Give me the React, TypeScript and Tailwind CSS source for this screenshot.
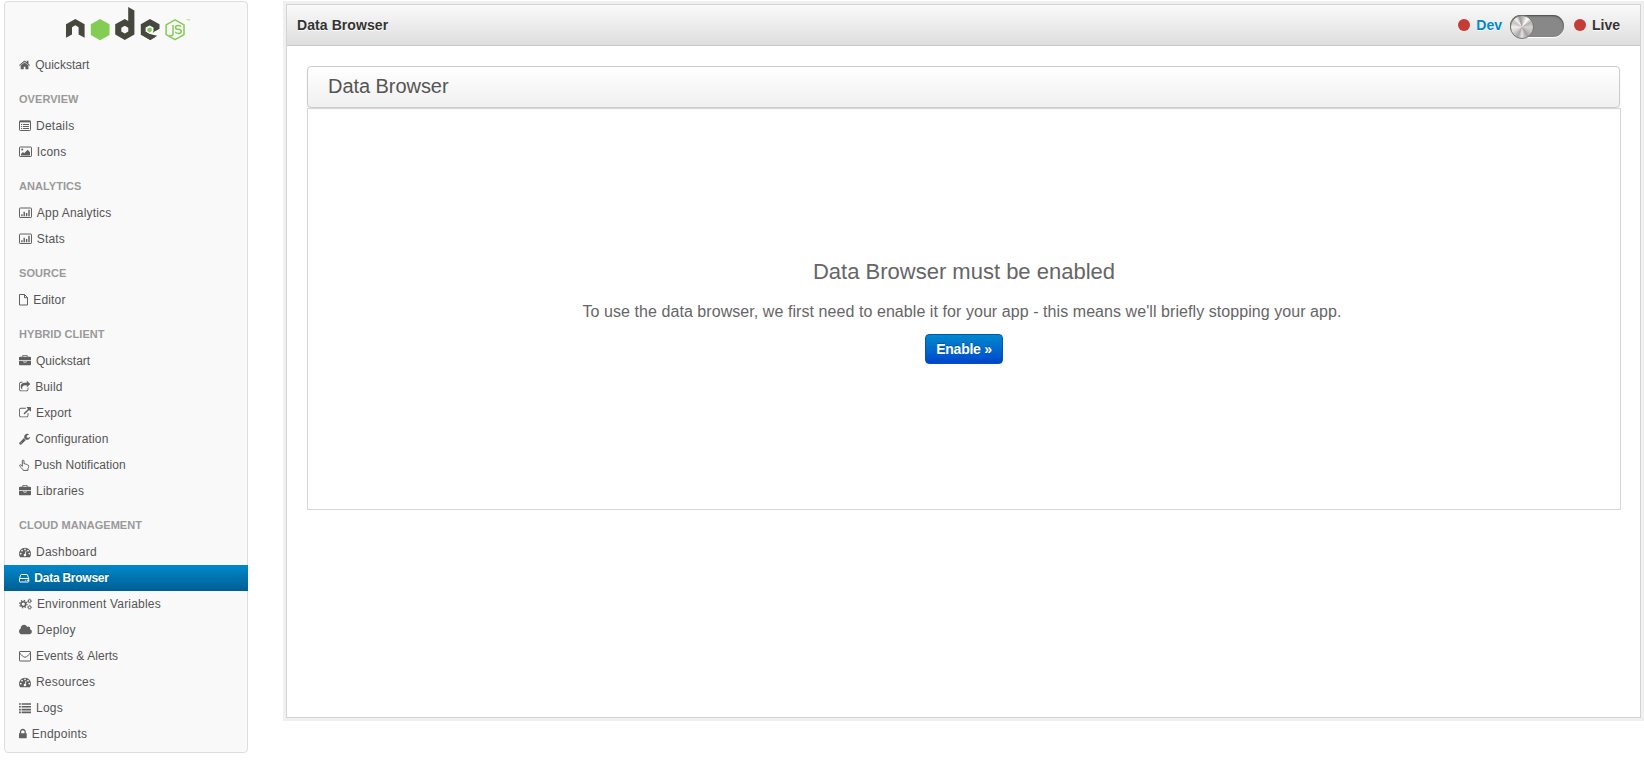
import React from "react";

type IconDef = { w: number; x?: number; d: string };

const icons: Record<string, IconDef> = {
  home: { w: 1664, x: 64, d: "M1472 992v480q0 26-19 45t-45 19h-384v-384h-256v384h-384q-26 0-45-19t-19-45v-480q0-1 .5-3t.5-3l575-474 575 474q1 2 1 6zm223-69l-62 74q-8 9-21 11h-3q-13 0-21-7l-692-577-692 577q-12 8-24 7-13-2-21-11l-62-74q-8-10-7-23.5t11-21.5l719-599q32-26 76-26t76 26l244 204v-195q0-14 9-23t23-9h192q14 0 23 9t9 23v408l219 182q10 8 11 21.5t-7 23.5z" },
  briefcase: { w: 1792, d: "M640 256h512v-128h-512v128zm1152 640v480q0 66-47 113t-113 47h-1472q-66 0-113-47t-47-113v-480h672v160q0 26 19 45t45 19h320q26 0 45-19t19-45v-160h672zm-768 0v128h-256v-128h256zm768-480v384h-1792v-384q0-66 47-113t113-47h352v-160q0-40 28-68t68-28h576q40 0 68 28t28 68v160h352q66 0 113 47t47 113z" },
  share: { w: 1664, x: 64, d: "M1472 989v259q0 119-84.500 203.500t-203.500 84.500h-832q-119 0-203.500-84.500t-84.500-203.500v-832q0-119 84.500-203.500t203.500-84.500h255q13 0 22.500 9.500t9.500 22.500q0 27-26 32-77 26-133 60-10 4-16 4h-112q-66 0-113 47t-47 113v832q0 66 47 113t113 47h832q66 0 113-47t47-113v-214q0-19 18-29 28-13 54-37 16-16 35-8 21 9 21 29zm237-496l-384 384q-18 19-45 19-12 0-25-5-39-17-39-59v-192h-160q-323 0-438 131-119 137-74 473 3 23-20 34-8 2-12 2-16 0-26-13-10-14-21-31t-39.500-68.500-49.500-99.500-38.500-114-17.500-122q0-49 3.500-91t14-90 28-88 47-81.500 68.500-74 94.500-61.500 124.500-48.500 159.500-30.500 196.500-11h160v-192q0-42 39-59 13-5 25-5 26 0 45 19l384 384q19 19 19 45t-19 45z" },
  external: { w: 1792, d: "M1408 928v320q0 119-84.500 203.500t-203.500 84.500h-832q-119 0-203.500-84.500t-84.500-203.500v-832q0-119 84.500-203.500t203.500-84.500h704q14 0 23 9t9 23v64q0 14-9 23t-23 9h-704q-66 0-113 47t-47 113v832q0 66 47 113t113 47h832q66 0 113-47t47-113v-320q0-14 9-23t23-9h64q14 0 23 9t9 23zm384-864v512q0 26-19 45t-45 19-45-19l-176-176-652 652q-10 10-23 10t-23-10l-114-114q-10-10-10-23t10-23l652-652-176-176q-19-19-19-45t19-45 45-19h512q26 0 45 19t19 45z" },
  wrench: { w: 1664, x: 64, d: "M448 1472q0-26-19-45t-45-19-45 19-19 45 19 45 45 19 45-19 19-45zm644-420l-682 682q-37 37-90 37-52 0-91-37l-106-108q-38-36-38-90 0-53 38-91l681-681q39 98 114.500 173.500t173.500 114.500zm634-435q0 39-23 106-47 134-164.500 217.500t-258.500 83.500q-185 0-316.500-131.500t-131.500-316.500 131.500-316.500 316.500-131.500q58 0 121.500 16.500t107.500 46.500q16 11 16 28t-16 28l-293 169v224l193 107q5-3 79-48.500t135.500-81 70.500-35.500q15 0 23.500 10t8.500 25z" },
  dashboard: { w: 1792, d: "M384 1152q0-53-37.500-90.500t-90.500-37.500-90.500 37.500-37.500 90.500 37.500 90.500 90.500 37.500 90.500-37.500 37.500-90.500zm192-448q0-53-37.500-90.500t-90.500-37.500-90.500 37.500-37.500 90.500 37.500 90.500 90.500 37.500 90.500-37.500 37.500-90.500zm428 481l101-382q6-26-7.500-48.500t-38.500-29.500-48 6.500-30 39.500l-101 382q-60 5-107 43.500t-63 98.500q-20 77 20 146t117 89 146-20 89-117q16-60-6-117t-72-91zm660-33q0-53-37.500-90.500t-90.500-37.500-90.500 37.500-37.500 90.500 37.500 90.500 90.500 37.500 90.500-37.500 37.500-90.500zm-640-640q0-53-37.500-90.500t-90.500-37.500-90.500 37.500-37.500 90.500 37.500 90.500 90.500 37.500 90.500-37.500 37.500-90.500zm448 192q0-53-37.500-90.500t-90.500-37.500-90.500 37.500-37.500 90.500 37.500 90.500 90.500 37.500 90.500-37.500 37.500-90.500zm320 448q0 261-141 483-19 29-54 29h-1402q-35 0-54-29-141-221-141-483 0-182 71-348t191-286 286-191 348-71 348 71 286 191 191 286 71 348z" },
  cloud: { w: 1920, x: -64, d: "M1856 1152q0 159-112.500 271.500t-271.500 112.500h-1088q-185 0-316.500-131.500t-131.500-316.500q0-132 71-241.500t187-163.500q-2-28-2-43 0-212 150-362t362-150q158 0 286.500 88t187.500 230q70-62 166-62 106 0 181 75t75 181q0 75-41 138 129 30 213 134.500t84 239.500z" },
  lock: { w: 1152, x: 320, d: "M640 768h512v-192q0-106-75-181t-181-75-181 75-75 181v192zm832 96v576q0 40-28 68t-68 28h-960q-40 0-68-28t-28-68v-576q0-40 28-68t68-28h32v-192q0-184 132-316t316-132 316 132 132 316v192h32q40 0 68 28t28 68z" },
};

// Glyphs on a 12px grid
const drawn: Record<string, { w: number; node: React.ReactNode }> = {
  listAlt: {
    w: 12,
    node: (
      <>
        <rect x=".5" y="1" width="11" height="9.500" rx=".8" />
        <path d="M.5 1.500h11" strokeWidth="1.800" />
        <path d="M2 4.500h1.200M4 4.500h6M2 6.500h1.200M4 6.500h6M2 8.500h1.200M4 8.500h6" />
      </>
    ),
  },
  picture: {
    w: 12.86,
    node: (
      <>
        <rect x=".5" y="1" width="12" height="9.500" rx=".6" />
        <path fill="currentColor" stroke="none" d="M2 9.500V8l2-2 1.200 1.200L8.700 3.800 11 6.200v3.300z" />
        <circle cx="3.200" cy="3.600" r="1" fill="currentColor" stroke="none" />
      </>
    ),
  },
  chart: {
    w: 12.86,
    node: (
      <>
        <rect x=".5" y="1" width="12" height="9.500" rx=".6" />
        <path strokeWidth="1.400" d="M2.900 9.300V7.300M5.200 9.300V4.800M7.600 9.300V6M10 9.300V2.700" />
      </>
    ),
  },
  list: {
    w: 12,
    node: <path strokeWidth="1.600" d="M0 2h1.800M2.600 2H12M0 4.800h1.800M2.600 4.800H12M0 7.600h1.800M2.600 7.600H12M0 10.400h1.800M2.600 10.400H12" />,
  },
  fileAlt: { w: 9.3, node: <path d="M.5 .5h5l3 3v7.500h-8zM5.500 .5v3.200h3" /> },
  hand: { w: 10.3, node: <path d="M3.300 7.400V2q0-.9.800-.9t.9.900v2.700q1.300-.2 1.700.5 1.300-.2 1.600.7 1.400 0 1.400 1.400 0 1.300-.7 2.200v1.900H4.200q0-1-1.700-2.400Q.6 7.400.6 6.600q.1-.8.900-.8t1.800 1.600z" /> },
  hdd: { w: 10.3, node: <><path d="M.5 6.800v2.600q0 .6.600.6h8q.6 0 .6-.6V6.800q0-.5-1.200-3.900-.2-.4-.6-.4H2.300q-.4 0-.6.400Q.5 6.300.5 6.800z" /><path d="M.5 6.500h9.200M6.300 8.300h.9M8 8.300h.9" /></> },
  mail: { w: 12, node: <path d="M1 1.500h10q.5 0 .5.500v8.500q0 .5-.5.500H1q-.5 0-.5-.5V2q0-.5.500-.5zM.6 2.800Q1 4 2.600 5.200 5 7.300 6 7.300t3.400-2.100Q11 4 11.400 2.800" /> },
};

function Cogs() {
  return (
    <svg className="block h-3 w-[12.900px] shrink-0 overflow-visible" viewBox="0 0 12.900 12" fill="none" stroke="currentColor">
      <circle cx="4.300" cy="6.100" r="2.400" strokeWidth="1.500" />
      <circle cx="4.300" cy="6.100" r="3.700" strokeWidth="1.200" strokeDasharray="1.350 1.556" />
      <circle cx="10.600" cy="3" r="1.300" strokeWidth="1" />
      <circle cx="10.600" cy="3" r="2" strokeWidth=".7" strokeDasharray=".9 .67" />
      <circle cx="10.600" cy="9.300" r="1.300" strokeWidth="1" />
      <circle cx="10.600" cy="9.300" r="2" strokeWidth=".7" strokeDasharray=".9 .67" />
    </svg>
  );
}

function Icon({ name }: { name: string }) {
  if (name === "cogs") return <Cogs />;
  const s = drawn[name];
  if (s) {
    return (
      <svg className="block h-3 shrink-0 overflow-visible" width={s.w} viewBox={`0 0 ${s.w} 12`} fill="none" stroke="currentColor" strokeWidth="1" strokeLinejoin="round">
        {s.node}
      </svg>
    );
  }
  const i = icons[name];
  return (
    <svg className="block h-3 shrink-0 overflow-visible" width={(i.w / 1792) * 12} viewBox={`${i.x ?? 0} 0 ${i.w} 1792`} fill="currentColor">
      <path d={i.d} />
    </svg>
  );
}

function Item({ icon, label, active, tracking = "tracking-[0.150px]" }: { icon: string; label: string; active?: boolean; tracking?: string }) {
  return (
    <a
      className={
        active
          ? "-mx-px flex h-[26px] items-center gap-[5px] bg-gradient-to-b from-[#0088cc] to-[#005f94] pl-[15px] font-bold text-white [text-shadow:0_-1px_0_rgba(0,0,0,0.2)]"
          : "flex h-[26px] items-center gap-[5px] pl-[14px] text-[#555555]"
      }
    >
      <span className={active ? "text-white" : "text-[#606060]"}>
        <Icon name={icon} />
      </span>
      <span className={active ? "tracking-[-0.250px]" : tracking}>{label}</span>
    </a>
  );
}

function Heading({ children }: { children: string }) {
  return <h3 className="mt-[9px] flex h-[26px] items-center pb-[2px] pl-[14px] text-[11px] font-bold tracking-[0.050px] text-[#999999]">{children}</h3>;
}

function Logo() {
  return (
    <svg className="ml-[60px] mt-[4px] block h-[36px] w-[125px]" viewBox="65 6 125 36">
      <g fill="#46483e">
        <path d="M66 24.300L75.300 19l9.300 5.300v13.400l-6-3.300v-7.200L75.300 25.200 72 27.200v7.200l-6 3.300z" />
        <path fillRule="evenodd" d="M128.200 7l6.200 3.400v24.200l-9.600 5.400-9.600-5.400V24.300l9.600-5.300 3.400 1.900zM124.800 25.700l-3.500 2v3.900l3.500 2 3.500-2v-3.900z" />
        <path d="M150 19l9.500 5.300v4.700l-6.400 3.800-3.600-6.600-3.700 2.100v3.500l9.500 5.300-5 3-9.500-5.400V24.300z" />
        <path d="M145.800 31.800l3.700 2.200 7.800 1.700-7 4.300-6-3.400z" />
      </g>
      <path fill="#f9f9f9" d="M149.600 25.400l3.900 2.200v3.900l-3.900 2.200-3.900-2.200v-3.900zM153.400 32.200l6.600-3.400v3.900l-4.200 2.300z" />
      <path fill="#83cd54" d="M100.100 19l9.400 5.300v10.600l-9.400 5.300-9.300-5.300V24.300zM149.600 27.400l2.200 1.200v2.500l-2.200 1.300-2.200-1.300v-2.500z" />
      <path fill="none" stroke="#83cd54" strokeWidth="1.500" strokeLinejoin="round" d="M175 19.800l9 5v9.900l-9 5-8.900-5v-9.900z" />
      <path fill="none" stroke="#83cd54" strokeWidth="1.500" d="M173 25v8.500q0 2.200-1.800 2.200-1 0-2-.7M181 26.500q-1-.9-2.900-.9-2.600 0-2.600 1.800t2.800 1.800q3 .2 3 2.100 0 2.100-2.900 2.100-2.200 0-3.300-1.500" />
      <path fill="none" stroke="#83cd54" strokeWidth=".5" d="M186.500 19.500h1.500M188.500 20.500v-1l.6.800.6-.8v1" />
    </svg>
  );
}

export default function App() {
  return (
    <div className="flex h-[762px] w-[1644px] overflow-hidden bg-white font-['Liberation_Sans',Arial,sans-serif] text-[12px] text-[#555555]">
      <aside className="ml-[4px] mt-[1px] h-[752px] w-[244px] shrink-0 rounded-[4px] border border-[#dddddd] bg-[#f9f9f9]">
        <Logo />
        <nav className="mt-[10px]">
          <Item icon="home" label="Quickstart" tracking="tracking-[0.020px]" />
          <Heading>OVERVIEW</Heading>
          <Item icon="listAlt" label="Details" tracking="tracking-[0.250px]" />
          <Item icon="picture" label="Icons" />
          <Heading>ANALYTICS</Heading>
          <Item icon="chart" label="App Analytics" tracking="tracking-[0.200px]" />
          <Item icon="chart" label="Stats" />
          <Heading>SOURCE</Heading>
          <Item icon="fileAlt" label="Editor" />
          <Heading>HYBRID CLIENT</Heading>
          <Item icon="briefcase" label="Quickstart" tracking="tracking-[0.020px]" />
          <Item icon="share" label="Build" />
          <Item icon="external" label="Export" />
          <Item icon="wrench" label="Configuration" />
          <Item icon="hand" label="Push Notification" tracking="tracking-[0.080px]" />
          <Item icon="briefcase" label="Libraries" tracking="tracking-[0.250px]" />
          <Heading>CLOUD MANAGEMENT</Heading>
          <Item icon="dashboard" label="Dashboard" tracking="tracking-[0.250px]" />
          <Item icon="hdd" label="Data Browser" active />
          <Item icon="cogs" label="Environment Variables" tracking="tracking-[0.200px]" />
          <Item icon="cloud" label="Deploy" tracking="tracking-[0.250px]" />
          <Item icon="mail" label="Events & Alerts" tracking="tracking-[0.050px]" />
          <Item icon="dashboard" label="Resources" tracking="tracking-[0.200px]" />
          <Item icon="list" label="Logs" tracking="tracking-[0.250px]" />
          <Item icon="lock" label="Endpoints" tracking="tracking-[0.250px]" />
        </nav>
      </aside>

      <main className="ml-[38px] mt-[4px] h-[714px] w-[1355px] shrink-0 border border-[#d4d4d4] bg-white shadow-[0_0_0_3px_#f0f0f0]">
        <header className="flex h-[41px] items-center justify-between border-b border-[#c8c8c8] bg-gradient-to-b from-[#fafafa] to-[#dedede] pl-[10px] pr-[20px] text-[14px] font-bold text-[#333333] [text-shadow:0_1px_0_#ffffff]">
          <h1 className="tracking-[0.080px]">Data Browser</h1>
          <div className="flex items-center">
            <span className="size-[12px] rounded-full bg-[#c43c35]" />
            <span className="ml-[6px] text-[#0088cc]">Dev</span>
            <span className="ml-[8px] mt-[2px] flex h-[22px] w-[54px] items-center rounded-full bg-[#888888] shadow-[inset_0_1px_2px_#444444,0_1px_0_#ffffff]">
              <span className="mt-[2px] size-[24px] shrink-0 rounded-full border border-[#777777] bg-[conic-gradient(#b5b0b0,#e0dddd_20deg,#ffffff_35deg,#b5b0b0_60deg,#d8d4d4_90deg,#c4bfbf_120deg,#a39d9d_150deg,#e6e3e3_180deg,#aaa5a5_205deg,#d8d4d4_240deg,#f0eeee_270deg,#c4bfbf_300deg,#f4f2f2_325deg,#a39d9d_345deg,#b5b0b0)]" />
            </span>
            <span className="ml-[10px] size-[12px] rounded-full bg-[#c43c35]" />
            <span className="ml-[6px]">Live</span>
          </div>
        </header>
        <section className="ml-[20px] mt-[20px] w-[1314px]">
          <div className="flex h-[42px] w-[1313px] items-center rounded-[4px] border border-[#cccccc] bg-gradient-to-b from-white to-[#f0f0f0] pb-[2px] pl-[20px] shadow-[0_1px_2px_rgba(0,0,0,0.08)]">
            <h2 className="text-[20px] tracking-[-0.050px] text-[#555555]">Data Browser</h2>
          </div>
          <div className="flex h-[402px] flex-col items-center border border-[#d8d8d8]">
            <h2 className="mt-[148px] text-[22px] leading-[30px] text-[#666666]">Data Browser must be enabled</h2>
            <p className="mt-[14px] pr-[4px] text-[16px] leading-[22px] tracking-[0.065px] text-[#666666]">
              To use the data browser, we first need to enable it for your app - this means we'll briefly stopping your app.
            </p>
            <button className="mt-[11px] h-[30px] w-[78px] rounded-[4px] border border-[#0055bb] bg-gradient-to-b from-[#0088cc] to-[#0044cc] text-[14px] font-bold tracking-[-0.250px] text-white [text-shadow:0_-1px_0_rgba(0,0,0,0.25)]">
              Enable »
            </button>
          </div>
        </section>
      </main>
    </div>
  );
}
